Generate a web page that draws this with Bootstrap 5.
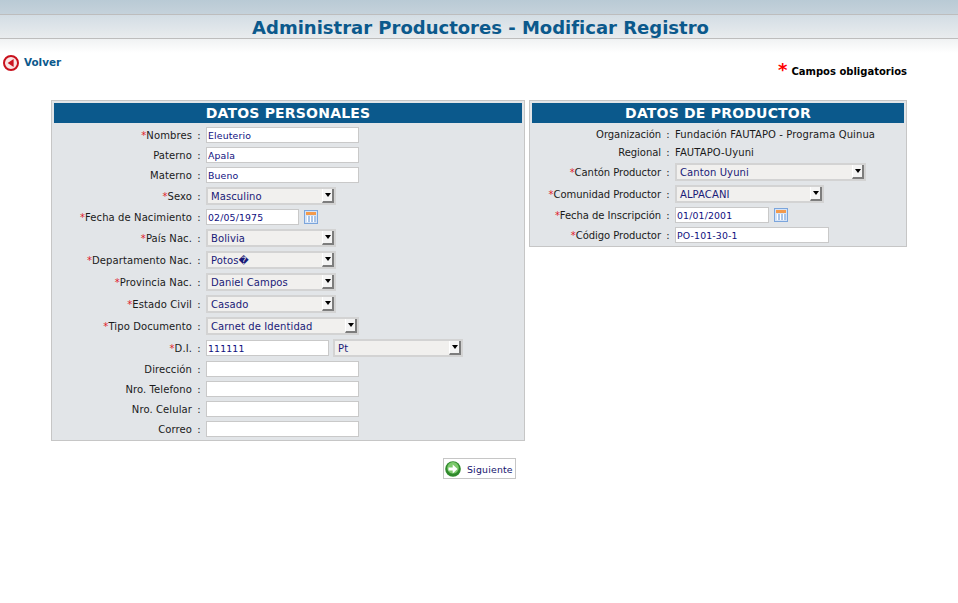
<!DOCTYPE html>
<html lang="es">
<head>
<meta charset="utf-8">
<title>Administrar Productores</title>
<link href="https://cdn.jsdelivr.net/npm/bootstrap@5.3.0/dist/css/bootstrap.min.css" rel="stylesheet">
<style>
body{font-family:"DejaVu Sans",sans-serif;font-size:10px;letter-spacing:.1px;color:#1a1a1a;background:#fff;min-height:603px}
.top-strip{height:14px;background:linear-gradient(#b9cad5,#c5d2db)}
.title-bar{height:25px;border-top:1px solid #bdbdbd;border-bottom:1px solid #bdbdbd;background:linear-gradient(#d3dde4,#e9ecee);color:#0b598c;font-size:18px;font-weight:700;line-height:26px;letter-spacing:0;overflow:hidden;padding-left:3px}
.fade-strip{height:14px;background:linear-gradient(#f0f2f3,#fff)}
.tool-row{height:47px;padding-left:3px}
.back-link{color:#0b598c;font-weight:700;font-size:10.4px;text-decoration:none;margin-top:2px;height:16px;letter-spacing:0;gap:5px}
.req-note{font-weight:700;color:#000;font-size:10px;margin:10px 51px 0 0;line-height:16px;letter-spacing:0}
.req-star{color:#f00;font-size:18px;line-height:14px;font-weight:700;margin-right:4px;vertical-align:-1px}
.panel-wrap{padding-left:51px;gap:4px}
.form-panel{background:#e2e5e8;border:1px solid #c6c6c6;padding:2px}
.panel-a{width:474px;height:341px}
.panel-b{width:378px;height:147px}
.panel-head{background:#0b598c;color:#fff;font-weight:700;font-size:14px;line-height:20px;height:20px;letter-spacing:.2px}
.first-row{margin-top:2px}
.frow{display:flex;align-items:center}
.panel-a .flabel{width:138px}
.panel-b .flabel{width:129px;letter-spacing:-.05px}
.flabel{text-align:right;white-space:nowrap;flex:none}
.req{color:#e0202a}
.fsep{width:14px;flex:none;text-align:center}
.h20{height:20px}.h22{height:22px}.h18{height:18px}
.txt{height:16px;border:1px solid #c9c9c9;background:#fff;color:#101080;font:9.33px "DejaVu Sans",sans-serif;letter-spacing:.15px;padding:0 1px;border-radius:0;outline:0;display:block;flex:none}
.w153{width:153px}.w154{width:154px}.w93{width:93px}.w94{width:94px}.w123{width:123px}
.sel-box{height:18px;border:2px solid #d3d3d3;background:#f1f0ee;color:#1a1a78;display:flex;align-items:center;padding-left:3px;flex:none;justify-content:space-between}
.sel-btn{width:12px;height:14px;background:#f4f4f4;border-right:2px solid #7d7d7d;border-bottom:2px solid #7d7d7d;border-left:1px solid #fff;display:flex;align-items:center;justify-content:center;flex:none}
.sel-btn::after{content:"";border-left:3px solid transparent;border-right:3px solid transparent;border-top:4px solid #000}
.w130{width:130px}.w191{width:191px}.w149{width:149px}
.cal{margin-left:5px;flex:none;display:block}
.di-sel{margin-left:4px}
.next-row{padding-left:392px;margin-top:17px}
.next-btn{width:73px;height:21px;border:1px solid #c6c6c6;background:#fff;color:#14146e;font-size:9.33px;display:flex;align-items:center;padding:0 0 0 1px;letter-spacing:.2px;border-radius:0}
.next-label{margin-left:6px;padding-top:2px}
</style>
</head>
<body>
<div class="top-strip"></div>
<div class="title-bar text-center">Administrar Productores - Modificar Registro</div>
<div class="fade-strip"></div>
<div class="tool-row d-flex justify-content-between align-items-start">
  <a href="#" class="back-link d-flex align-items-center">
    <svg width="16" height="16" viewBox="0 0 16 16"><circle cx="8" cy="8" r="7" fill="#f9e4e4" stroke="#c8101c" stroke-width="2"/><path d="M10.6 4v8L4.6 8z" fill="#cc1420"/></svg>
    <span>Volver</span>
  </a>
  <div class="req-note"><span class="req-star">*</span>Campos obligatorios</div>
</div>
<div class="d-flex align-items-start panel-wrap">
  <div>
    <div class="form-panel panel-a">
      <div class="panel-head text-center">DATOS PERSONALES</div>
      <div class="frow h20 first-row"><div class="flabel"><span class="req">*</span>Nombres</div><div class="fsep">:</div><input class="txt w153" value="Eleuterio"></div>
      <div class="frow h20"><div class="flabel">Paterno</div><div class="fsep">:</div><input class="txt w153" value="Apala"></div>
      <div class="frow h20"><div class="flabel">Materno</div><div class="fsep">:</div><input class="txt w153" value="Bueno"></div>
      <div class="frow h22"><div class="flabel"><span class="req">*</span>Sexo</div><div class="fsep">:</div><div class="sel-box w130"><span>Masculino</span><span class="sel-btn"></span></div></div>
      <div class="frow h20"><div class="flabel"><span class="req">*</span>Fecha de Nacimiento</div><div class="fsep">:</div><input class="txt w93" value="02/05/1975">
        <svg class="cal" width="14" height="14" viewBox="0 0 14 14"><rect width="14" height="14" fill="#7ba5dc"/><rect x="1" y="1" width="12" height="12" fill="#d5e3f6"/><rect x="2" y="2" width="10" height="3" fill="#f39a4c"/><path d="M3 6h1v6H3zM6 6h1v6H6zM9 6h1v6H9z" fill="#fff"/><path d="M4 6h2v6H4zM7 6h2v6H7zM10 6h2v6h-2z" fill="#a9c4e8"/></svg></div>
      <div class="frow h22"><div class="flabel"><span class="req">*</span>País Nac.</div><div class="fsep">:</div><div class="sel-box w130"><span>Bolivia</span><span class="sel-btn"></span></div></div>
      <div class="frow h22"><div class="flabel"><span class="req">*</span>Departamento Nac.</div><div class="fsep">:</div><div class="sel-box w130"><span>Potos�</span><span class="sel-btn"></span></div></div>
      <div class="frow h22"><div class="flabel"><span class="req">*</span>Provincia Nac.</div><div class="fsep">:</div><div class="sel-box w130"><span>Daniel Campos</span><span class="sel-btn"></span></div></div>
      <div class="frow h22"><div class="flabel"><span class="req">*</span>Estado Civil</div><div class="fsep">:</div><div class="sel-box w130"><span>Casado</span><span class="sel-btn"></span></div></div>
      <div class="frow h22"><div class="flabel"><span class="req">*</span>Tipo Documento</div><div class="fsep">:</div><div class="sel-box w153"><span>Carnet de Identidad</span><span class="sel-btn"></span></div></div>
      <div class="frow h22"><div class="flabel"><span class="req">*</span>D.I.</div><div class="fsep">:</div><input class="txt w123" value="111111"><div class="sel-box w130 di-sel"><span>Pt</span><span class="sel-btn"></span></div></div>
      <div class="frow h20"><div class="flabel">Dirección</div><div class="fsep">:</div><input class="txt w153"></div>
      <div class="frow h20"><div class="flabel">Nro. Telefono</div><div class="fsep">:</div><input class="txt w153"></div>
      <div class="frow h20"><div class="flabel">Nro. Celular</div><div class="fsep">:</div><input class="txt w153"></div>
      <div class="frow h20"><div class="flabel">Correo</div><div class="fsep">:</div><input class="txt w153"></div>
    </div>
    <div class="next-row">
      <button type="button" class="next-btn btn">
        <svg width="16" height="16" viewBox="0 0 16 16"><circle cx="8" cy="8" r="7.8" fill="#2f8a2c"/><circle cx="8" cy="6.8" r="5.8" fill="#7cc96c"/><path d="M3.5 6.5h4.2V3.6L12.6 8l-4.9 4.4V9.5H3.5z" fill="#fff"/></svg>
        <span class="next-label">Siguiente</span>
      </button>
    </div>
  </div>
  <div class="form-panel panel-b">
    <div class="panel-head text-center">DATOS DE PRODUCTOR</div>
    <div class="frow h18 first-row"><div class="flabel">Organización</div><div class="fsep">:</div><div>Fundación FAUTAPO - Programa Quinua</div></div>
    <div class="frow h18"><div class="flabel">Regional</div><div class="fsep">:</div><div>FAUTAPO-Uyuni</div></div>
    <div class="frow h22"><div class="flabel"><span class="req">*</span>Cantón Productor</div><div class="fsep">:</div><div class="sel-box w191"><span>Canton Uyuni</span><span class="sel-btn"></span></div></div>
    <div class="frow h22"><div class="flabel"><span class="req">*</span>Comunidad Productor</div><div class="fsep">:</div><div class="sel-box w149"><span>ALPACANI</span><span class="sel-btn"></span></div></div>
    <div class="frow h20"><div class="flabel"><span class="req">*</span>Fecha de Inscripción</div><div class="fsep">:</div><input class="txt w94" value="01/01/2001">
      <svg class="cal" width="14" height="14" viewBox="0 0 14 14"><rect width="14" height="14" fill="#7ba5dc"/><rect x="1" y="1" width="12" height="12" fill="#d5e3f6"/><rect x="2" y="2" width="10" height="3" fill="#f39a4c"/><path d="M3 6h1v6H3zM6 6h1v6H6zM9 6h1v6H9z" fill="#fff"/><path d="M4 6h2v6H4zM7 6h2v6H7zM10 6h2v6h-2z" fill="#a9c4e8"/></svg></div>
    <div class="frow h20"><div class="flabel"><span class="req">*</span>Código Productor</div><div class="fsep">:</div><input class="txt w154" value="PO-101-30-1"></div>
  </div>
</div>
</body>
</html>
